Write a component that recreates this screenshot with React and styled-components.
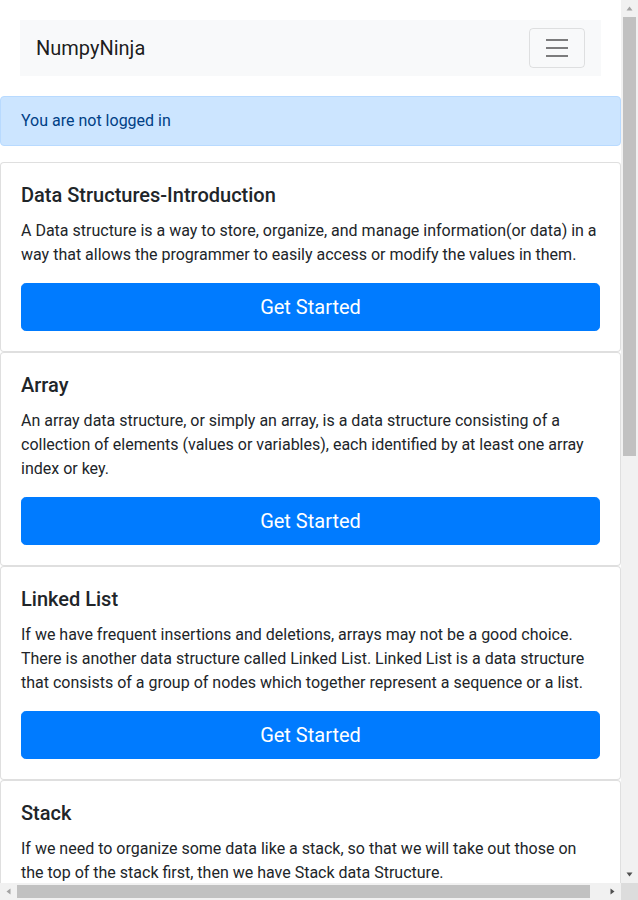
import React from 'react';
import styled, { createGlobalStyle } from 'styled-components';

const GlobalStyle = createGlobalStyle`
  html, body {
    margin: 0;
    padding: 0;
    overflow: hidden;
    background: #fff;
  }
  body {
    font-family: Roboto, "Liberation Sans", sans-serif;
    font-size: 16px;
    line-height: 1.5;
    color: #212529;
  }
  * { box-sizing: border-box; }
`;

const Viewport = styled.div`
  width: 638px;
  height: 900px;
  display: grid;
  grid-template-columns: 1fr 17px;
  grid-template-rows: 1fr 17px;
`;

const Content = styled.div`
  overflow: hidden;
  min-width: 0;
  min-height: 0;
`;

const Navbar = styled.nav`
  margin: 20px 20px 0;
  background: #f8f9fa;
  padding: 8px 16px;
  display: flex;
  align-items: center;
  justify-content: space-between;
`;

const Brand = styled.a`
  font-size: 20px;
  line-height: 1.5;
  padding: 5px 0;
  color: rgba(0, 0, 0, 0.9);
  text-decoration: none;
`;

const Toggler = styled.button`
  width: 56px;
  height: 40px;
  padding: 4px 12px;
  background: transparent;
  border: 1px solid rgba(0, 0, 0, 0.1);
  border-radius: 4px;
  display: flex;
  align-items: center;
  justify-content: center;
`;

const Alert = styled.div`
  margin: 20px 0 16px;
  padding: 12px 20px;
  border: 1px solid #b8daff;
  border-radius: 4px;
  background: #cce5ff;
  color: #004085;
`;

const CardList = styled.div`
  display: flex;
  flex-direction: column;
`;

const Card = styled.div`
  border: 1px solid rgba(0, 0, 0, 0.125);
  border-radius: 4px;
  background: #fff;
`;

const CardBody = styled.div`
  padding: 20px;
`;

const CardTitle = styled.h5`
  margin: 0 0 12px;
  font-size: 20px;
  font-weight: 500;
  line-height: 1.2;
  color: #212529;
`;

const CardText = styled.p`
  margin: 0 0 16px;
`;

const PrimaryButton = styled.button`
  display: block;
  width: 100%;
  padding: 8px 16px;
  font-family: inherit;
  font-size: 20px;
  line-height: 1.5;
  color: #fff;
  background: #007bff;
  border: 1px solid #007bff;
  border-radius: 4.8px;
`;

const VScroll = styled.div`
  background: #f1f1f1;
  display: flex;
  flex-direction: column;
`;

const HScroll = styled.div`
  background: #f1f1f1;
  display: flex;
`;

const Corner = styled.div`
  background: #dcdcdc;
`;

const ArrowBox = styled.div`
  width: 17px;
  height: 17px;
  flex: none;
  display: flex;
  align-items: center;
  justify-content: center;
`;

const VTrack = styled.div`
  flex: 1;
  padding: 0 2px;
`;

const HTrack = styled.div`
  flex: 1;
  padding: 2px 0;
`;

const Thumb = styled.div`
  background: #c1c1c1;
  height: ${p => (p.$h ? `${p.$h}px` : '100%')};
  width: ${p => (p.$w ? `${p.$w}px` : '100%')};
`;

const arrowPaths = {
  up: 'M0.5 4.5 L3.5 0.5 L6.5 4.5 Z',
  down: 'M0.5 0.5 L3.5 4.5 L6.5 0.5 Z',
  left: 'M4.5 0.5 L0.5 3.5 L4.5 6.5 Z',
  right: 'M0.5 0.5 L4.5 3.5 L0.5 6.5 Z',
};

function Arrow({ dir, active }) {
  const horizontal = dir === 'left' || dir === 'right';
  const color = active ? '#505050' : '#a3a3a3';
  return (
    <ArrowBox>
      <svg
        width={horizontal ? 5 : 7}
        height={horizontal ? 7 : 5}
        viewBox={horizontal ? '0 0 5 7' : '0 0 7 5'}
      >
        <path d={arrowPaths[dir]} fill={color} />
      </svg>
    </ArrowBox>
  );
}

const cards = [
  {
    title: 'Data Structures-Introduction',
    text: 'A Data structure is a way to store, organize, and manage information(or data) in a way that allows the programmer to easily access or modify the values in them.',
  },
  {
    title: 'Array',
    text: 'An array data structure, or simply an array, is a data structure consisting of a collection of elements (values or variables), each identified by at least one array index or key.',
  },
  {
    title: 'Linked List',
    text: 'If we have frequent insertions and deletions, arrays may not be a good choice. There is another data structure called Linked List. Linked List is a data structure that consists of a group of nodes which together represent a sequence or a list.',
  },
  {
    title: 'Stack',
    text: 'If we need to organize some data like a stack, so that we will take out those on the top of the stack first, then we have Stack data Structure.',
  },
];

export default function App() {
  return (
    <>
      <GlobalStyle />
      <Viewport>
        <Content>
          <Navbar>
            <Brand href="#">NumpyNinja</Brand>
            <Toggler aria-label="Toggle navigation">
              <svg width="30" height="30" viewBox="0 0 30 30">
                <path
                  d="M4 7h22M4 15h22M4 23h22"
                  stroke="rgba(0,0,0,0.5)"
                  strokeWidth="2"
                  strokeLinecap="butt"
                />
              </svg>
            </Toggler>
          </Navbar>
          <Alert>You are not logged in</Alert>
          <CardList>
            {cards.map(c => (
              <Card key={c.title}>
                <CardBody>
                  <CardTitle>{c.title}</CardTitle>
                  <CardText>{c.text}</CardText>
                  <PrimaryButton>Get Started</PrimaryButton>
                </CardBody>
              </Card>
            ))}
          </CardList>
        </Content>
        <VScroll>
          <Arrow dir="up" />
          <VTrack>
            <Thumb $h={439} />
          </VTrack>
          <Arrow dir="down" active />
        </VScroll>
        <HScroll>
          <Arrow dir="left" />
          <HTrack>
            <Thumb $w={573} />
          </HTrack>
          <Arrow dir="right" active />
        </HScroll>
        <Corner />
      </Viewport>
    </>
  );
}
